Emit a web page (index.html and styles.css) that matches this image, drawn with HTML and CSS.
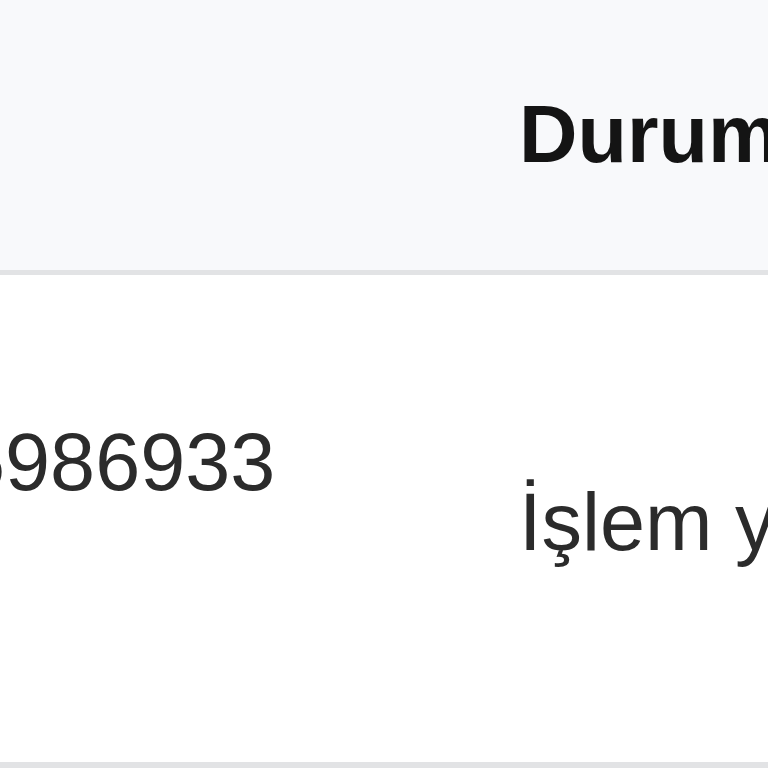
FILE: index.html
```html
<!DOCTYPE html>
<html lang="tr">
<head>
    <meta charset="UTF-8">
    <meta name="viewport" content="width=device-width, initial-scale=1.0">
    <title>Siparişler</title>
    <link rel="stylesheet" href="styles.css">
</head>
<body>
    <div class="table-wrap">
        <table class="orders">
            <thead>
                <tr>
                    <th class="col-phone"></th>
                    <th class="col-status">Durum</th>
                </tr>
            </thead>
            <tbody>
                <tr>
                    <td class="col-phone"><span class="phone">5986933</span></td>
                    <td class="col-status">İşlem yapılmadı</td>
                </tr>
            </tbody>
        </table>
    </div>
</body>
</html>
```

FILE: styles.css
```css
/* Reset basic styles */
* {
    margin: 0;
    padding: 0;
    box-sizing: border-box;
}

html, body {
    overflow: hidden;
}

body {
    font-family: "Liberation Sans", Arial, sans-serif;
    background: #ffffff;
    color: #2b2b2b;
}

.table-wrap {
    width: 768px;
    height: 768px;
    overflow: hidden;
}

.orders {
    border-collapse: collapse;
    table-layout: fixed;
    width: 1300px;
    margin-left: -108px;
    font-size: 81px;
    line-height: 1.5;
}

.orders th,
.orders td {
    text-align: left;
    white-space: nowrap;
    padding-left: 68px;
    padding-right: 68px;
}

.orders .col-phone {
    width: 559px;
}

.orders thead th {
    background-color: #f8f9fb;
    color: #141414;
    font-weight: bold;
    padding-top: 74px;
    padding-bottom: 74px;
    border-bottom: 5px solid #e2e3e5;
    vertical-align: top;
}

.orders tbody td {
    vertical-align: top;
    border-bottom: 6px solid #e2e3e5;
}

.orders tbody td.col-phone {
    padding-top: 127px;
}

.orders tbody td.col-status {
    padding-top: 187px;
    padding-bottom: 179px;
}
```
